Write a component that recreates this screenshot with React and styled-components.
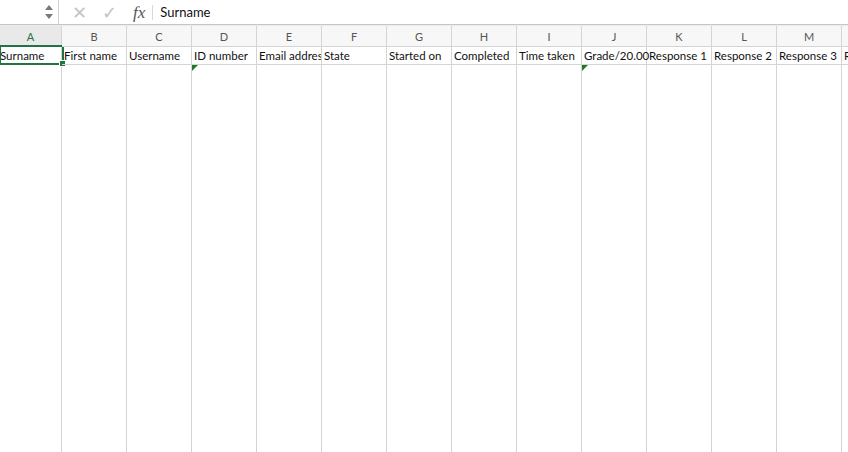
import styled, { createGlobalStyle } from "styled-components"

const Global = createGlobalStyle`
	html, body { margin:0; padding:0; background:#fff; overflow:hidden; }
	body { font-family:"Lato", "Open Sans", sans-serif; }
`

const Page = styled.div`
	width:848px;
	height:452px;
	display:flex;
	flex-direction:column;
	overflow:hidden;
`

const FormulaBar = styled.div`
	height:24px;
	display:flex;
	align-items:center;
	border-bottom:1px solid #c6c6c6;
	box-shadow:0 1px 0 #ececec;
	margin-bottom:1px;
	flex-shrink:0;
`

const NameBox = styled.div`
	width:59px;
	height:24px;
	border-right:1px solid #d0d0d0;
	display:flex;
	justify-content:flex-end;
	align-items:center;
	padding-right:5px;
	box-sizing:border-box;
`

const Stepper = styled.div`
	display:flex;
	flex-direction:column;
	gap:4px;
	align-items:center;
`

const Arrow = styled.div`
	width:0;
	height:0;
	border-left:4px solid transparent;
	border-right:4px solid transparent;
	${p => p.$up ? "border-bottom:5px solid #7a7a7a;" : "border-top:5px solid #7a7a7a;"}
`

const Tool = styled.span`
	color:#c4c4c4;
	font-size:18px;
	line-height:1;
	margin-left:${p => p.$gap}px;
	display:flex;
	align-items:center;
`

const Fx = styled.span`
	font-family:"Liberation Serif", "DejaVu Serif", serif;
	font-style:italic;
	font-size:17px;
	color:#555;
	margin-left:16px;
	padding-right:7px;
	border-right:1px solid #d8d8d8;
	line-height:15px;
`

const Formula = styled.span`
	font-size:13px;
	color:#111;
	margin-left:7px;
`

const Sheet = styled.div`
	flex:1;
	display:flex;
	position:relative;
`

const Column = styled.div`
	width:${p => p.$w}px;
	flex-shrink:0;
	border-right:1px solid #d4d4d4;
	display:flex;
	flex-direction:column;
	position:relative;
`

const Head = styled.div`
	height:20px;
	border-bottom:1px solid ${p => p.$active ? "#217346" : "#d4d4d4"};
	background:${p => p.$active ? "#e9e9e9" : "#f7f7f7"};
	color:${p => p.$active ? "#217346" : "#555"};
	font-size:11px;
	display:flex;
	align-items:center;
	justify-content:center;
`

const Cell = styled.div`
	height:17px;
	border-bottom:1px solid #d4d4d4;
	font-size:11.5px;
	color:#111;
	white-space:nowrap;
	overflow:${p => p.$spill ? "visible" : "hidden"};
	line-height:18px;
	padding-left:${p => p.$flush ? 0 : 2}px;
	position:relative;
	z-index:${p => p.$spill ? 1 : 0};
`

const Note = styled.div`
	position:absolute;
	left:0;
	top:39px;
	width:0;
	height:0;
	border-top:6px solid #1e7a2a;
	border-right:6px solid transparent;
`

const Selection = styled.div`
	position:absolute;
	left:-1px;
	top:19px;
	width:61px;
	height:16px;
	border:2px solid #217346;
	pointer-events:none;
`

const Handle = styled.div`
	position:absolute;
	right:-4px;
	bottom:-4px;
	width:5px;
	height:5px;
	background:#217346;
	border:1px solid #fff;
`

const cols = [
	["A", "Surname", 61],
	["B", "First name", 64],
	["C", "Username", 64],
	["D", "ID number", 64, true],
	["E", "Email address", 64],
	["F", "State", 64],
	["G", "Started on", 64],
	["H", "Completed", 64],
	["I", "Time taken", 64],
	["J", "Grade/20.00", 64, true, true],
	["K", "Response 1", 64],
	["L", "Response 2", 64],
	["M", "Response 3", 64],
	["N", "Response 4", 64],
]

export default function App() {
	return (
		<Page>
			<Global />
			<FormulaBar>
				<NameBox>
					<Stepper>
						<Arrow $up />
						<Arrow />
					</Stepper>
				</NameBox>
				<Tool $gap={13}>✕</Tool>
				<Tool $gap={15}>✓</Tool>
				<Fx>fx</Fx>
				<Formula>Surname</Formula>
			</FormulaBar>
			<Sheet>
				{cols.map(([letter, text, w, note, spill], i) => (
					<Column key={letter} $w={w}>
						<Head $active={i === 0}>{letter}</Head>
						<Cell $flush={i === 0} $spill={spill}>{text}</Cell>
						{note && <Note />}
						{i === 0 && (
							<Selection>
								<Handle />
							</Selection>
						)}
					</Column>
				))}
			</Sheet>
		</Page>
	)
}
